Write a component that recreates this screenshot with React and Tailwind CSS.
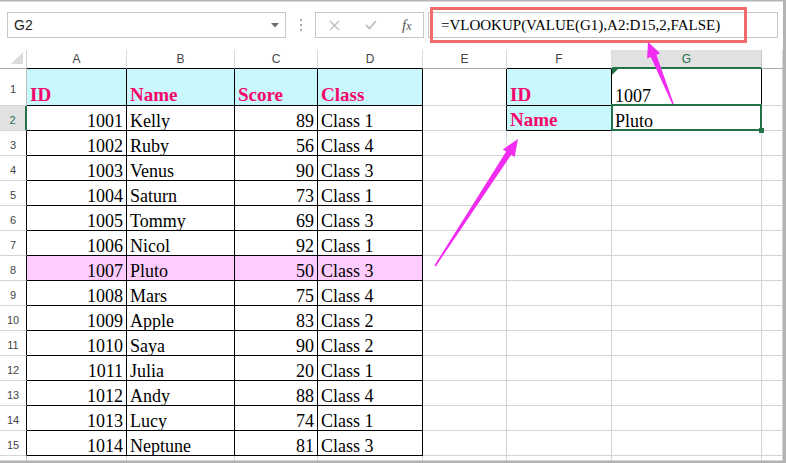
import React from 'react'

/**
 * Excel-like sheet: VLOOKUP example with annotations
 */
const data = [
  [1001, 'Kelly', 89, 'Class 1'],
  [1002, 'Ruby', 56, 'Class 4'],
  [1003, 'Venus', 90, 'Class 3'],
  [1004, 'Saturn', 73, 'Class 1'],
  [1005, 'Tommy', 69, 'Class 3'],
  [1006, 'Nicol', 92, 'Class 1'],
  [1007, 'Pluto', 50, 'Class 3'],
  [1008, 'Mars', 75, 'Class 4'],
  [1009, 'Apple', 83, 'Class 2'],
  [1010, 'Saya', 90, 'Class 2'],
  [1011, 'Julia', 20, 'Class 1'],
  [1012, 'Andy', 88, 'Class 4'],
  [1013, 'Lucy', 74, 'Class 1'],
  [1014, 'Neptune', 81, 'Class 3'],
]

const letters = ['A', 'B', 'C', 'D', 'E', 'F', 'G', 'H']

// A1:D15 and F1:G2 have black borders
const inTable = (r, c) =>
  (r >= 1 && r <= 15 && c >= 0 && c <= 3) || (r >= 1 && r <= 2 && (c === 5 || c === 6))

const getContent = (r, c) => {
  if (r === 1) {
    const head = { 0: 'ID', 1: 'Name', 2: 'Score', 3: 'Class', 5: 'ID' }
    if (head[c]) return { text: head[c], head: true }
    if (c === 6) return { text: '1007' }
    return null
  }
  if (r === 2 && c === 5) return { text: 'Name', head: true }
  if (r === 2 && c === 6) return { text: 'Pluto' }
  if (r >= 2 && r <= 15 && c <= 3) {
    const row = data[r - 2]
    return { text: String(row[c]), right: c === 0 || c === 2 }
  }
  return null
}

const HeaderRow = () => (
  <>
    <div className="flex items-end justify-end pr-[3px] pb-[4px] border-r border-b border-r-[#d4d4d4] border-b-[#ababab]">
      <svg width="12" height="12" viewBox="0 0 12 12">
        <polygon points="12,0 12,12 0,12" fill="#dcdcdc" />
      </svg>
    </div>
    {letters.map((l, c) => {
      if (l === 'G') {
        return (
          <div
            key={l}
            className="flex items-center justify-center bg-[#e1e1e1] text-[#217346] border-r border-r-[#c6c6c6] border-b-2 border-b-[#217346] text-[12px]"
          >
            {l}
          </div>
        )
      }
      return (
        <div
          key={l}
          className={
            'flex items-center justify-center text-[12px] text-[#444] border-r border-b border-r-[#dadada] ' +
            (inTable(1, c) ? 'border-b-black' : 'border-b-[#ababab]')
          }
        >
          {c < 7 ? l : ''}
        </div>
      )
    })}
  </>
)

const RowHeader = ({ r }) => {
  if (r === 2) {
    return (
      <div className="flex items-center justify-center pt-[4px] bg-[#e1e1e1] text-[#217346] text-[11px] border-b border-b-[#d4d4d4] border-r-2 border-r-[#217346]">
        2
      </div>
    )
  }
  return (
    <div
      className={
        'flex items-center justify-center pt-[4px] text-[11px] text-[#444] border-b border-r border-b-[#d4d4d4] ' +
        (r >= 3 && r <= 15 ? 'border-r-black' : 'border-r-[#bdbdbd]')
      }
    >
      {r <= 15 ? r : ''}
    </div>
  )
}

const Cell = ({ r, c }) => {
  const content = getContent(r, c)
  const right = inTable(r, c) || inTable(r, c + 1) ? 'border-r-black' : 'border-r-[#d4d4d4]'
  const bottom = inTable(r, c) || inTable(r + 1, c) ? 'border-b-black' : 'border-b-[#d4d4d4]'

  let bg = ''
  if ((r === 1 && c <= 3) || (c === 5 && (r === 1 || r === 2))) bg = 'bg-[#c8f7fc]'
  if (r === 8 && c <= 3) bg = 'bg-[#ffccff]'

  return (
    <div
      className={
        'relative flex items-end border-r border-b min-w-0 ' +
        right + ' ' + bottom + ' ' + bg + ' ' +
        (content && content.right ? 'justify-end pr-[3px]' : 'pl-[3px]')
      }
    >
      {content && (
        <span
          className={
            content.head
              ? "font-['Liberation_Serif',serif] font-bold text-[19px] leading-[20px] text-[#f4066b] whitespace-nowrap"
              : "font-['Liberation_Serif',serif] text-[18px] leading-[17px] text-black whitespace-nowrap"
          }
        >
          {content.text}
        </span>
      )}

      {/* маркер ошибки в G1 */}
      {r === 1 && c === 6 && (
        <svg className="absolute top-0 left-0" width="6" height="6" viewBox="0 0 6 6">
          <polygon points="0,0 6,0 0,6" fill="#217346" />
        </svg>
      )}

      {/* выделение G2 */}
      {r === 2 && c === 6 && (
        <>
          <div className="absolute top-[-2px] left-[-1px] right-[-1px] bottom-[-1px] border-2 border-[#217346]" />
          <div className="absolute right-[-3px] bottom-[-3px] w-[5px] h-[5px] bg-[#217346] z-10" />
        </>
      )}
    </div>
  )
}

const FormulaBar = () => (
  <div className="h-[49px] font-['Liberation_Sans',sans-serif]">
    <div className="h-px mt-px bg-[#dadada]" />
    <div className="flex items-start mt-[10px]">
      {/* Name box */}
      <div className="ml-[7px] w-[279px] h-[26px] border border-[#c6c6c6] flex items-center pl-[6px] pr-[6px]">
        <span className="text-[14px] text-[#222]">G2</span>
        <svg className="ml-auto" width="8" height="5" viewBox="0 0 8 5">
          <polygon points="0,0 8,0 4,4.5" fill="#6b6b6b" />
        </svg>
      </div>

      {/* dots */}
      <div className="ml-[14px] mt-[7px] flex flex-col gap-[3px]">
        <div className="w-[2px] h-[2px] bg-[#a6a6a6]" />
        <div className="w-[2px] h-[2px] bg-[#a6a6a6]" />
        <div className="w-[2px] h-[2px] bg-[#a6a6a6]" />
      </div>

      {/* cancel / enter / fx */}
      <div className="ml-[13px] w-[109px] h-[26px] border border-[#c6c6c6] flex items-center pl-[13px] gap-[25px]">
        <svg width="11" height="11" viewBox="0 0 11 11">
          <path d="M1 1 L10 10 M10 1 L1 10" stroke="#bfbfbf" strokeWidth="1.4" />
        </svg>
        <svg width="12" height="10" viewBox="0 0 12 10">
          <path d="M1 5 L4.5 8.5 L11 1" stroke="#bfbfbf" strokeWidth="1.8" fill="none" />
        </svg>
        <span className="font-['Liberation_Serif',serif] italic text-[15px] text-[#555] leading-none">
          f<span className="text-[12px]">x</span>
        </span>
      </div>

      {/* formula input */}
      <div className="relative ml-[4px] w-[350px] h-[26px] border border-[#c6c6c6] flex items-center pl-[12px]">
        <span className="font-['Liberation_Serif',serif] text-[15px] text-black whitespace-nowrap">
          =VLOOKUP(VALUE(G1),A2:D15,2,FALSE)
        </span>
        <div className="absolute left-[1px] top-[-6px] w-[317px] h-[36px] border-[3px] border-[#f06b6b]" />
      </div>
    </div>
  </div>
)

const App = () => {
  const rowNums = Array.from({ length: 16 }, (_, i) => i + 1)

  return (
    <div className="relative w-[786px] h-[463px] bg-[#b3b3b3] overflow-hidden">
      <div className="w-[783px] h-[460px] bg-white font-['Liberation_Sans',sans-serif]">
        <FormulaBar />

        <div className="grid grid-cols-[27px_100px_108px_83px_105px_84px_105px_150px_21px] grid-rows-[19px_37px_repeat(14,25px)_5px]">
          <HeaderRow />
          {rowNums.map((r) => (
            <React.Fragment key={r}>
              <RowHeader r={r} />
              {letters.map((l, c) => (
                <Cell key={l} r={r} c={c} />
              ))}
            </React.Fragment>
          ))}
        </div>
      </div>

      {/* стрелки-аннотации */}
      <svg className="absolute inset-0 pointer-events-none" width="786" height="463" viewBox="0 0 786 463">
        <polygon
          points="518,139 514.6,157 511.2,154.8 435.7,266.4 434.3,265.6 506.2,151.6 502.8,149.4"
          fill="#ef2cef"
        />
        <polygon
          points="648,42 660.1,53.3 656.4,54.8 673.7,103.7 672.3,104.3 650.8,57 647.1,58.5"
          fill="#ef2cef"
        />
      </svg>
    </div>
  )
}

export default App
